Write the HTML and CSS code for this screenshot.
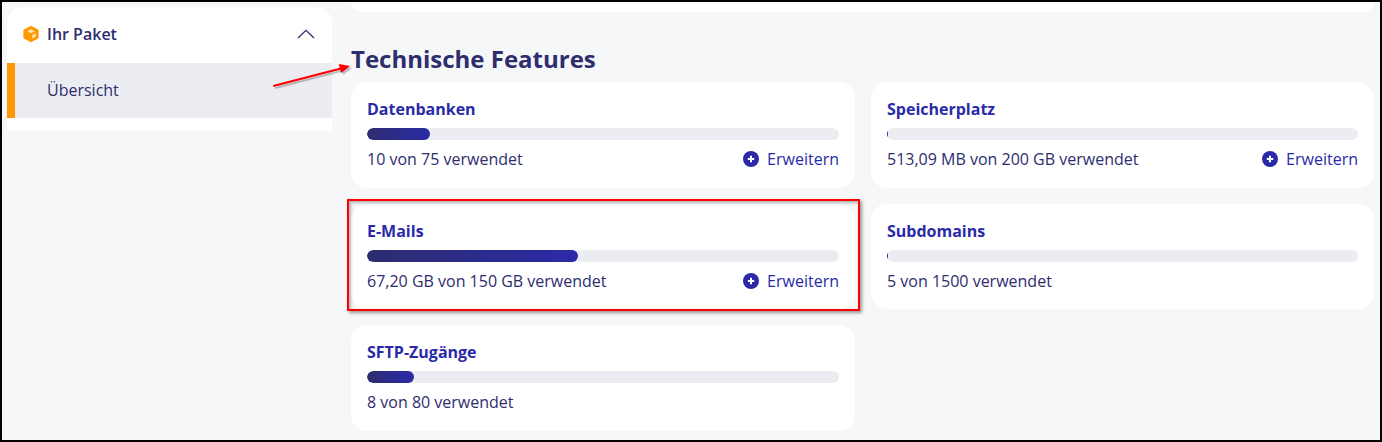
FILE: index.html
```html
<!DOCTYPE html>
<html lang="de">
<head>
<meta charset="utf-8">
<title>Technische Features</title>
<link rel="stylesheet" href="styles.css">
</head>
<body>
<div class="frame">
  <aside class="sidebar">
    <div class="side-head">
      <svg class="box-icon" viewBox="0 0 16 16" width="16" height="16" aria-hidden="true">
        <path class="box-fill" d="M8 .8 14.700 4.200V11.800L8 15.200 1.300 11.800V4.200z"/>
        <path class="box-light" d="M8 3.200 11.800 5.200 8 7.200 4.200 5.200z"/>
        <path class="box-light" d="M9.200 9 12.800 7.200V10.600L9.200 12.400z"/>
      </svg>
      <span class="side-title">Ihr Paket</span>
      <svg class="chevron" viewBox="0 0 18 10" width="18" height="10" aria-hidden="true">
        <path d="M1 9 9 1.300 17 9"/>
      </svg>
    </div>
    <div class="side-item">Übersicht</div>
  </aside>
  <main class="content">
    <div class="top-card"></div>
    <h2 class="heading">Technische Features</h2>
    <div class="grid">
      <section class="card">
        <h3 class="card-title">Datenbanken</h3>
        <div class="track"><div class="fill" style="width:13.3%"></div></div>
        <div class="row"><span>10 von 75 verwendet</span>
          <a class="more"><svg class="plus" viewBox="0 0 16 16" width="16" height="16" aria-hidden="true"><circle cx="8" cy="8" r="8"/><path d="M8 4.800v6.400M4.800 8h6.400"/></svg>Erweitern</a></div>
      </section>
      <section class="card">
        <h3 class="card-title">Speicherplatz</h3>
        <div class="track"><div class="fill" style="width:0.3%"></div></div>
        <div class="row"><span>513,09 MB von 200 GB verwendet</span>
          <a class="more"><svg class="plus" viewBox="0 0 16 16" width="16" height="16" aria-hidden="true"><circle cx="8" cy="8" r="8"/><path d="M8 4.800v6.400M4.800 8h6.400"/></svg>Erweitern</a></div>
      </section>
      <section class="card">
        <h3 class="card-title">E-Mails</h3>
        <div class="track"><div class="fill" style="width:44.8%"></div></div>
        <div class="row"><span>67,20 GB von 150 GB verwendet</span>
          <a class="more"><svg class="plus" viewBox="0 0 16 16" width="16" height="16" aria-hidden="true"><circle cx="8" cy="8" r="8"/><path d="M8 4.800v6.400M4.800 8h6.400"/></svg>Erweitern</a></div>
      </section>
      <section class="card">
        <h3 class="card-title">Subdomains</h3>
        <div class="track"><div class="fill" style="width:0.3%"></div></div>
        <div class="row"><span>5 von 1500 verwendet</span></div>
      </section>
      <section class="card">
        <h3 class="card-title">SFTP-Zugänge</h3>
        <div class="track"><div class="fill" style="width:10%"></div></div>
        <div class="row"><span>8 von 80 verwendet</span></div>
      </section>
    </div>
  </main>
  <div class="mark-box"></div>
  <svg class="mark-arrow" viewBox="0 0 90 36" width="90" height="36" aria-hidden="true">
    <path class="arrow-shadow" d="M3 29 69.700 11.700 68.800 8 80 10 71.200 17 70.300 13.700 3.500 31z"/>
    <path class="arrow-red" d="M1 27 67.700 9.700 66.800 6 78 8 69.200 15 68.300 11.700 1.500 29z"/>
  </svg>
</div>
</body>
</html>
```
FILE: styles.css
```css
* { box-sizing: border-box; }
html, body { margin: 0; padding: 0; }
body {
  font-family: "Open Sans", "Noto Sans", sans-serif;
  background: #f6f7f9;
  color: #2e2d6e;
}
.frame {
  position: relative;
  display: flex;
  align-items: flex-start;
  width: 1382px;
  height: 442px;
  overflow: hidden;
  border: 2px solid #000;
  padding-left: 5px;
  background: #f6f7f9;
}
.sidebar {
  flex: none;
  width: 325px;
  height: 124px;
  margin-top: 5px;
  background: #fff;
  border-radius: 16px 16px 0 0;
}
.side-head {
  display: flex;
  align-items: center;
  height: 56px;
  padding: 0 17px 2px 16px;
  font-size: 16px;
  font-weight: 600;
}
.box-icon { flex: none; margin-right: 8px; }
.box-fill { fill: #ff9800; stroke: #ff9800; stroke-width: 1.800; stroke-linejoin: round; }
.box-light { fill: #ffe0b0; }
.side-title { flex: 1; }
.chevron { flex: none; fill: none; stroke: #2e2d6e; stroke-width: 1.300; }
.side-item {
  height: 55px;
  padding-left: 32px;
  line-height: 54px;
  font-size: 16px;
  background: #ecedf2;
  border-left: 8px solid #ff9800;
}
.content {
  flex: none;
  width: 1023px;
  margin-left: 19px;
}
.top-card {
  height: 10px;
  background: #fff;
  border-radius: 0 0 16px 16px;
}
.heading {
  margin: 0;
  padding-top: 30px;
  height: 70px;
  font-size: 24px;
  line-height: 33px;
  font-weight: 700;
  color: #2e2d6e;
}
.grid {
  display: grid;
  grid-template-columns: 504px 503px;
  gap: 16px;
}
.card {
  height: 105.500px;
  padding: 16px;
  background: #fff;
  border-radius: 16px;
}
.card-title {
  margin: 0;
  height: 22px;
  font-size: 16px;
  line-height: 22px;
  font-weight: 700;
  color: #2a2aa8;
}
.track {
  height: 12px;
  margin-top: 8px;
  background: #ecedf2;
  border-radius: 6px;
  overflow: hidden;
}
.fill {
  height: 100%;
  border-radius: 6px;
  background: linear-gradient(90deg, #2e2d6e, #2a2aa8);
}
.row {
  display: flex;
  justify-content: space-between;
  align-items: center;
  margin-top: 8px;
  height: 22px;
  font-size: 16px;
  line-height: 22px;
}
.more {
  display: flex;
  align-items: center;
  color: #2a2aa8;
}
.plus { margin-right: 8px; }
.plus circle { fill: #2a2aa8; }
.plus path { stroke: #fff; stroke-width: 2; fill: none; }
.mark-box {
  position: absolute;
  left: 345px;
  top: 197px;
  width: 513px;
  height: 112px;
  border: 2px solid #f00;
  box-shadow: 2px 2px 3px rgba(60, 60, 60, .5), inset 2px 2px 3px rgba(60, 60, 60, .35);
}
.mark-arrow { position: absolute; left: 270px; top: 56px; }
.arrow-red { fill: #f00; }
.arrow-shadow { fill: rgba(60, 60, 60, .3); }
```
